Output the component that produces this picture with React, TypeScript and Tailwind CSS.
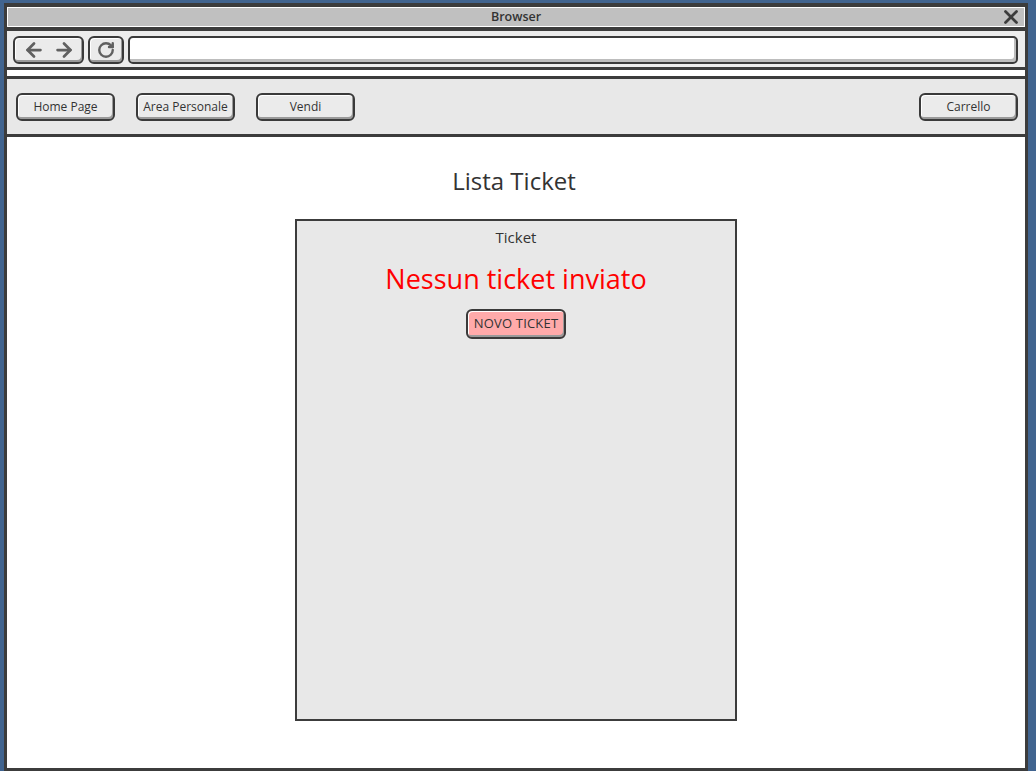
import React from 'react';
import { ArrowLeft, ArrowRight, RotateCw, X } from 'lucide-react';

const font = 'font-["Open_Sans","Noto_Sans",sans-serif]';

function SketchButton({ label, className = '' }: { label: string; className?: string }) {
  return (
    <button
      className={`flex h-[28px] w-[99px] items-center justify-center rounded-[6px] border-2 border-[#3a3a3a] bg-[#ebebeb] text-[12px] text-[#333] shadow-[inset_-1px_-2px_0_#9a9a9a,inset_1px_1px_0_#ffffff] ${className}`}
    >
      {label}
    </button>
  );
}

export default function App() {
  return (
    <div className={`h-[771px] overflow-hidden bg-[#41648f] pl-[4px] pt-[3px] ${font}`}>
      <div className="flex h-[768px] w-[1024px] flex-col border-[3px] border-t-4 border-[#3c3c3c] bg-white">
        {/* title bar */}
        <div className="bg-white p-[1px]">
          <div className="relative flex h-[18px] items-center justify-center bg-[#c0c0c0] pt-[1px] text-[12.5px] font-semibold text-[#333]">
            Browser
            <X size={22} strokeWidth={3} className="absolute right-[2px] top-[-2px] text-[#3c3c3c]" />
          </div>
        </div>

        {/* toolbar */}
        <div className="flex h-[43px] items-start gap-[4px] border-b-[3px] border-t-4 border-[#3c3c3c] bg-[#ececec] pl-[6px] pr-[7px] pt-[5px]">
          <div className="flex h-[28px] w-[71px] items-center justify-center gap-[8px] rounded-[6px] border-2 border-[#3a3a3a] bg-[#ebebeb] text-[#606060] shadow-[inset_-1px_-2px_0_#9a9a9a,inset_1px_1px_0_#ffffff]">
            <ArrowLeft size={22} strokeWidth={3} />
            <ArrowRight size={22} strokeWidth={3} />
          </div>
          <div className="flex h-[28px] w-[36px] items-center justify-center rounded-[6px] border-2 border-[#3a3a3a] bg-[#ebebeb] text-[#606060] shadow-[inset_-1px_-2px_0_#9a9a9a,inset_1px_1px_0_#ffffff]">
            <RotateCw size={18} strokeWidth={3.2} />
          </div>
          <div className="h-[28px] flex-1 rounded-[5px] border-2 border-[#3a3a3a] bg-white shadow-[inset_-2px_-3px_0_#bdbdbd]" />
        </div>
        <div className="h-[6px] bg-white" />
        <div className="h-[3px] bg-[#3c3c3c]" />

        {/* nav */}
        <div className="flex h-[58px] items-start gap-[21px] border-b-[3px] border-[#3c3c3c] bg-[#e8e8e8] pl-[9px] pr-[7px] pt-[14px]">
          <SketchButton label="Home Page" />
          <SketchButton label="Area Personale" />
          <SketchButton label="Vendi" />
          <SketchButton label="Carrello" className="ml-auto" />
        </div>

        {/* content */}
        <div className="flex flex-1 flex-col items-center pt-[28px]">
          <h1 className="h-[32px] pr-[4px] text-[24px] leading-[32px] text-[#333]">Lista Ticket</h1>
          <div className="mt-[22px] flex h-[502px] w-[442px] flex-col items-center border-2 border-[#3c3c3c] bg-[#e8e8e8]">
            <div className="mt-[6px] text-[15px] leading-[20px] text-[#333]">Ticket</div>
            <div className="mt-[14px] text-[27px] leading-[36px] text-[#ff0000]">Nessun ticket inviato</div>
            <button className="mt-[12px] flex h-[30px] w-[100px] items-center justify-center rounded-[6px] border-2 border-[#3a3a3a] bg-[#ffaaaa] text-[13px] tracking-[0.2px] text-[#333] shadow-[inset_-1px_-2px_0_#9a9a9a,inset_1px_1px_0_#ffffff]">
              NOVO TICKET
            </button>
          </div>
        </div>
      </div>
    </div>
  );
}
